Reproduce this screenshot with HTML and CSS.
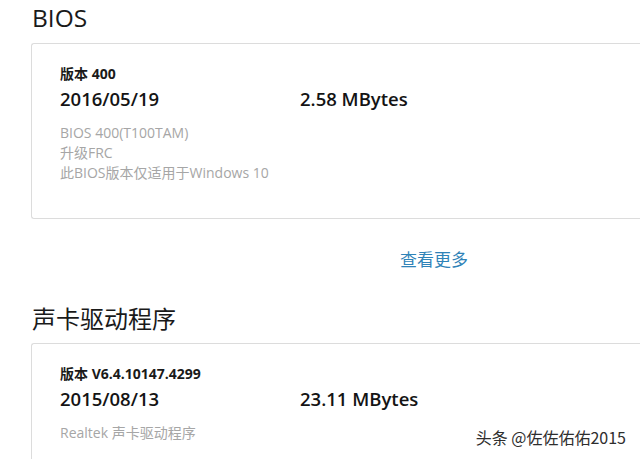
FILE: index.html
```html
<!DOCTYPE html>
<html lang="zh-CN">
<head>
<meta charset="utf-8">
<title>驱动程序</title>
<link rel="stylesheet" href="styles.css">
</head>
<body>
<div class="page">
  <section class="group">
    <h2 class="group-title">BIOS</h2>
    <div class="card">
      <div class="version">版本 400</div>
      <div class="meta">
        <span class="date">2016/05/19</span>
        <span class="size">2.58 MBytes</span>
      </div>
      <div class="desc">
        <div>BIOS 400(T100TAM)</div>
        <div>升级FRC</div>
        <div>此BIOS版本仅适用于Windows 10</div>
      </div>
    </div>
    <div class="more-row"><a class="more" href="#">查看更多</a></div>
  </section>
  <section class="group group-second">
    <h2 class="group-title">声卡驱动程序</h2>
    <div class="card">
      <div class="version">版本 V6.4.10147.4299</div>
      <div class="meta">
        <span class="date">2015/08/13</span>
        <span class="size">23.11 MBytes</span>
      </div>
      <div class="desc">
        <div>Realtek 声卡驱动程序</div>
      </div>
    </div>
  </section>
</div>
<div class="watermark">头条 @佐佐佑佑2015</div>
</body>
</html>
```

FILE: styles.css
```css
html, body {
  margin: 0;
  padding: 0;
  background: #ffffff;
  overflow: hidden;
}
body {
  font-family: "Open Sans", "Noto Sans CJK SC", sans-serif;
  color: #1e1e1e;
  width: 640px;
  height: 459px;
  position: relative;
}
.page {
  padding-left: 31px;
  padding-top: 2px;
}
.group-title {
  margin: 0;
  padding-left: 1px;
  font-size: 24.5px;
  font-weight: 400;
  line-height: 32px;
  color: #1a1a1a;
}
.card {
  margin-top: 9px;
  border: 1px solid #dcdcdc;
  border-right: 0;
  border-radius: 3px 0 0 3px;
  padding: 21px 28px 35px 28px;
}
.version {
  font-size: 14px;
  font-weight: 700;
  line-height: 18px;
  color: #1a1a1a;
}
.meta {
  display: flex;
  margin-top: 4px;
  font-size: 18.5px;
  font-weight: 600;
  line-height: 24px;
  color: #141414;
}
.date {
  width: 240px;
}
.desc {
  margin-top: 12px;
  font-size: 14px;
  line-height: 20px;
  color: #a6a6a6;
}
.more-row {
  padding-left: 369px;
  margin-top: 28px;
  line-height: 24px;
}
.more {
  font-family: "Noto Sans CJK SC", sans-serif;
  font-size: 17px;
  color: #2f83b8;
  text-decoration: none;
}
.group-second {
  margin-top: 30px;
}
.group-second .group-title {
  font-family: "Noto Sans CJK SC", sans-serif;
  font-size: 24px;
}
.watermark {
  position: absolute;
  right: 14px;
  bottom: 12px;
  font-family: "Noto Sans CJK SC", sans-serif;
  font-size: 16px;
  line-height: 20px;
  color: #2e2e2e;
  text-shadow: 0 0 2px #ffffff, 0 0 3px #ffffff;
}
```
